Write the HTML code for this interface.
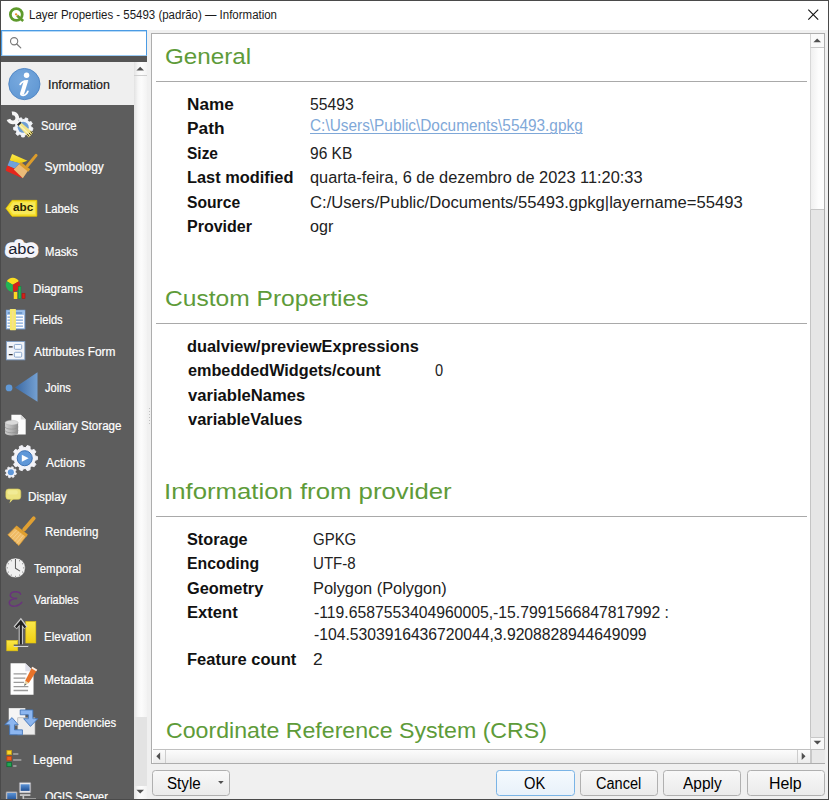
<!DOCTYPE html>
<html>
<head>
<meta charset="utf-8">
<title>Layer Properties</title>
<style>
html,body{margin:0;padding:0;}
body{width:829px;height:800px;overflow:hidden;background:#f0f0f0;font-family:"Liberation Sans",sans-serif;position:relative;}
.a{position:absolute;}
.t{position:absolute;white-space:pre;line-height:30px;transform-origin:0 0;}
svg{position:absolute;overflow:visible;}
.b{position:absolute;top:770.2px;height:23.8px;border:1px solid #b0b0b0;border-radius:3.5px;background:linear-gradient(#f8f8f8,#ebebeb);}
</style>
</head>
<body>
<!-- window chrome -->
<div class="a" style="left:0;top:0;width:829px;height:800px;background:#f0f0f0"></div>
<div class="a" style="left:0;top:0;width:829px;height:30px;background:#fff"></div>
<!-- search box -->
<div class="a" style="left:1px;top:30px;width:144px;height:24px;border:1px solid #4a9be4;border-bottom-color:#9ccbf3;background:#fff;box-shadow:inset 0 1px 0 0 #b9daf6, inset 1px 0 0 0 #d4e8f9"></div>
<!-- sidebar -->
<div class="a" style="left:1px;top:56px;width:146px;height:6px;background:#555555"></div>
<div class="a" style="left:1px;top:62px;width:132.6px;height:738px;background:#5d5d5d"></div>
<div class="a" style="left:1px;top:62.3px;width:132.6px;height:42.5px;background:#efefef"></div>
<!-- sidebar scrollbar -->
<div class="a" style="left:133.6px;top:62px;width:13.4px;height:738px;background:linear-gradient(90deg,#e2e2e2,#f6f6f6 30%,#fcfcfc 55%,#f3f3f3)"></div>
<div class="a" style="left:133.6px;top:75px;width:13.4px;height:1px;background:#cfcfcf"></div>
<div class="a" style="left:133.6px;top:717px;width:13.4px;height:69px;background:#e3e3e3"></div>
<!-- splitter dots -->
<div class="a" style="left:148.9px;top:408.1px;width:1.1px;height:1.1px;background:#c2c2c2"></div><div class="a" style="left:148.9px;top:411.1px;width:1.1px;height:1.1px;background:#c2c2c2"></div><div class="a" style="left:148.9px;top:414.0px;width:1.1px;height:1.1px;background:#c2c2c2"></div><div class="a" style="left:148.9px;top:417.0px;width:1.1px;height:1.1px;background:#c2c2c2"></div><div class="a" style="left:148.9px;top:420.0px;width:1.1px;height:1.1px;background:#c2c2c2"></div><div class="a" style="left:148.9px;top:423.0px;width:1.1px;height:1.1px;background:#c2c2c2"></div>
<!-- content frame -->
<div class="a" style="left:151.2px;top:32.8px;width:672.3px;height:729.7px;border:1px solid #adadad;background:#fff"></div>
<div class="a" style="left:156px;top:81px;width:651px;height:1px;background:#a9a9a9"></div>
<div class="a" style="left:156px;top:323px;width:651px;height:1px;background:#a9a9a9"></div>
<div class="a" style="left:156px;top:516px;width:651px;height:1px;background:#a9a9a9"></div>
<!-- vertical scrollbar -->
<div class="a" style="left:810.3px;top:34px;width:14px;height:715px;background:#e6e6e6;border-left:1.3px solid #c4c4c4;box-sizing:border-box"></div>
<div class="a" style="left:810.3px;top:34px;width:14px;height:14px;background:#f9f9f9;border-left:1.3px solid #d4d4d4;border-bottom:1px solid #c8c8c8;box-sizing:border-box"></div>
<div class="a" style="left:810.3px;top:48px;width:14px;height:162px;background:linear-gradient(90deg,#f0f0f0,#fdfdfd 60%);border-left:1.3px solid #d8d8d8;border-bottom:1.5px solid #c6c6c6;box-sizing:border-box"></div>
<div class="a" style="left:810.3px;top:736.5px;width:14px;height:13px;background:#f9f9f9;border-left:1.3px solid #d4d4d4;border-top:1px solid #c8c8c8;box-sizing:border-box"></div>
<!-- horizontal scrollbar -->
<div class="a" style="left:152.5px;top:749.3px;width:672px;height:14px;background:#e8e8e8;border-top:1px solid #c0c0c0;box-sizing:border-box"></div>
<div class="a" style="left:152.5px;top:750.3px;width:658px;height:13px;background:linear-gradient(#fcfcfc,#ececec)"></div>
<div class="a" style="left:164.5px;top:750.3px;width:1px;height:13px;background:#cdcdcd"></div>
<div class="a" style="left:797px;top:750.3px;width:1px;height:13px;background:#cdcdcd"></div>
<div class="a" style="left:810.3px;top:750.3px;width:1.3px;height:13px;background:#c8c8c8"></div>
<!-- buttons -->
<div class="b" style="left:151.5px;width:76px"></div>
<div class="b" style="left:496px;width:76.5px;border-color:#7ab4e6;background:linear-gradient(#f5fafe,#e8f1fa)"></div>
<div class="b" style="left:579.8px;width:76px"></div>
<div class="b" style="left:663.2px;width:76px"></div>
<div class="b" style="left:747.2px;width:75.5px"></div>
<svg width="829" height="800" viewBox="0 0 829 800" style="left:0;top:0">
<defs>
<linearGradient id="gj" x1="0" x2="1"><stop offset="0" stop-color="#3a68a2"/><stop offset="1" stop-color="#74a0d2"/></linearGradient>
<linearGradient id="gy" x1="0" x2="0" y1="0" y2="1"><stop offset="0" stop-color="#fbe84a"/><stop offset="1" stop-color="#efcf12"/></linearGradient>
<linearGradient id="gcyl" x1="0" x2="1"><stop offset="0" stop-color="#d0d0d0"/><stop offset="0.5" stop-color="#b4b4b4"/><stop offset="1" stop-color="#8c8c8c"/></linearGradient>
<linearGradient id="gscr" x1="0" x2="0" y1="0" y2="1"><stop offset="0" stop-color="#5b93d6"/><stop offset="1" stop-color="#1f4f94"/></linearGradient>
<radialGradient id="ginfo" cx="0.4" cy="0.35" r="0.75"><stop offset="0" stop-color="#78a9de"/><stop offset="1" stop-color="#5f97d3"/></radialGradient>
</defs>
<g transform="translate(0,0) scale(0.07246)"><circle cx="225" cy="200" r="82" fill="none" stroke="#5e9a2c" stroke-width="38"/>
<path d="M235,215 L320,290" stroke="#5e9a2c" stroke-width="36" stroke-linecap="butt"/>
<path d="M225,200 L250,224" stroke="#e8a040" stroke-width="14" opacity="0.7"/>
<circle cx="222" cy="198" r="16" fill="#f08c28"/></g>
<g transform="translate(0,0) scale(0.12500)"><circle cx="113" cy="330" r="29" fill="none" stroke="#7a7a7a" stroke-width="9"/><path d="M134,352 L166,383" stroke="#7a7a7a" stroke-width="10" stroke-linecap="round"/></g>
<path d="M808.3,9.7 L818.2,19.6 M818.2,9.7 L808.3,19.6" stroke="#111" stroke-width="1.1" fill="none"/>
<g transform="translate(0,60) scale(0.06250)"><circle cx="390" cy="385" r="250" fill="url(#ginfo)" stroke="#4c82c2" stroke-width="14"/>
<circle cx="425" cy="243" r="44" fill="#fff"/>
<path d="M415,338 L350,548" stroke="#fff" stroke-width="66" stroke-linecap="butt" fill="none"/>
<path d="M322,392 C345,352 385,334 440,334" stroke="#fff" stroke-width="26" fill="none" stroke-linecap="round"/>
<path d="M335,552 C375,580 425,560 446,502" stroke="#fff" stroke-width="28" fill="none" stroke-linecap="round"/></g>
<g transform="translate(0,105) scale(0.06031)"><path d="M514.9,366.1 L546.6,380.9 L538.1,422.9 L503.1,424.2 L487.1,450.5 L501.8,482.2 L468.3,508.9 L440.6,487.5 L411.5,497.3 L402.3,531.1 L359.5,530.0 L352.1,495.8 L323.5,484.5 L294.7,504.5 L262.6,476.2 L279.0,445.2 L264.2,418.2 L229.4,415.0 L223.0,372.7 L255.4,359.4 L261.5,329.3 L236.8,304.5 L259.2,267.9 L292.5,278.6 L316.6,259.4 L313.6,224.6 L354.3,210.9 L372.9,240.6 L403.7,241.3 L423.8,212.7 L463.7,228.4 L458.9,263.1 L482.0,283.5 L515.8,274.5 L536.3,312.1 L510.4,335.6Z" fill="#f2f4f8" stroke="#f2f4f8" stroke-width="14" stroke-linejoin="round"/>
<circle cx="385" cy="370" r="92" fill="#6f9fd4"/>
<path d="M198.9,139 A75,75 0 1 1 140.2,237.8" fill="none" stroke="#f6f6f6" stroke-width="62" stroke-linecap="butt"/>
<path d="M250,258 L305,318" stroke="#f6f6f6" stroke-width="62"/>
<path d="M282,322 L335,272 L358,298 L306,348Z" fill="#2a2a2a"/>
<path d="M306,348 L358,298 L548,462 L478,540Z" fill="#f3e486"/><path d="M330,340 L505,505" stroke="#f9f3c0" stroke-width="18"/>
<path d="M452,478 L482,522 M482,462 L512,502 M508,440 L538,478" stroke="#3a3210" stroke-width="16" fill="none"/>
</g>
<g transform="translate(0,145) scale(0.06031)"><path d="M200,150 L455,262 L330,305 L160,255Z" fill="url(#gy)"/>
<path d="M160,255 L330,303 L240,392 L125,338Z" fill="#6fa2da"/>
<path d="M118,338 L240,390 L372,550 L95,428Z" fill="#e5261c"/>
<path d="M335,300 L470,420 L378,550 L228,405Z" fill="#ebbb78"/>
<path d="M345,283 L502,402 L468,445 L318,322Z" fill="#dc9d2c"/>
<path d="M455,345 L598,172" stroke="#dc9c2c" stroke-width="50" stroke-linecap="round"/></g>
<g transform="translate(0,190) scale(0.06031)"><path d="M100,305 L200,172 L610,172 L610,435 L200,435Z" fill="#f5df2a" stroke="#e6c400" stroke-width="14" stroke-linejoin="round"/>
<path d="M150,305 L215,205 L580,205 L580,402 L215,402Z" fill="#f9ec6e" opacity="0.7"/>
<text x="216" y="356" font-family="Liberation Sans, sans-serif" font-weight="bold" font-size="190" fill="#2a2600" textLength="335" lengthAdjust="spacingAndGlyphs">abc</text></g>
<g transform="translate(0,230) scale(0.06031)"><text x="135" y="405" font-family="Liberation Sans, sans-serif" font-size="255" fill="#1c2230" stroke="#f4f4fa" stroke-width="125" stroke-linejoin="round" paint-order="stroke" textLength="440" lengthAdjust="spacingAndGlyphs">abc</text></g>
<g transform="translate(0,270) scale(0.04831)"><path d="M265,305 L139.4,232.5 A145,145 0 0 1 390.6,232.5Z" fill="#fbdd20"/>
<path d="M265,305 L390.6,232.5 A145,145 0 0 1 265.0,450.0Z" fill="#d2221a"/>
<path d="M265,305 L265.0,450.0 A145,145 0 0 1 139.4,232.5Z" fill="#22b356"/>
<rect x="285" y="455" width="72" height="145" fill="#fcd822"/>
<rect x="378" y="340" width="56" height="255" fill="#22b356" stroke="#14843a" stroke-width="10"/>
<rect x="456" y="482" width="62" height="108" fill="#d2221a" stroke="#a01410" stroke-width="10"/></g>
<g transform="translate(0,300) scale(0.04831)"><rect x="132" y="212" width="382" height="386" fill="#fdfdff" stroke="#78a4dc" stroke-width="20"/>
<rect x="140" y="218" width="366" height="90" fill="#9cc0ec"/>
<rect x="160" y="255" width="300" height="28" fill="#5a86c0"/>
<path d="M155,355 H475 M155,418 H475 M155,480 H475 M155,542 H475" stroke="#7ea6dc" stroke-width="24"/>
<rect x="205" y="185" width="125" height="440" rx="12" fill="#f6e86c"/>
<rect x="250" y="230" width="30" height="340" fill="#f3df9a" opacity="0.8"/></g>
<g transform="translate(0,332) scale(0.04831)"><rect x="132" y="198" width="382" height="378" fill="#f0f3f8" stroke="#7c9cc4" stroke-width="18"/>
<rect x="297" y="258" width="152" height="100" rx="22" fill="#f4faff" stroke="#7b9cc6" stroke-width="18"/>
<rect x="297" y="420" width="152" height="100" rx="22" fill="#f4faff" stroke="#7b9cc6" stroke-width="18"/>
<path d="M182,308 H262 M182,468 H262" stroke="#2c2c30" stroke-width="30"/></g>
<g transform="translate(0,365) scale(0.06031)"><circle cx="150" cy="380" r="56" fill="#6199d6"/>
<path d="M248,375 L622,122 L622,608Z" fill="url(#gj)"/></g>
<g transform="translate(0,405) scale(0.04831)"><path d="M235,200 L430,200 L532,300 L532,612 L235,612Z" fill="#fdfdfd"/>
<path d="M430,200 L532,300 L430,300Z" fill="#d6d6d6"/>
<path d="M105,365 V580 A135,50 0 0 0 375,580 V365Z" fill="url(#gcyl)"/>
<path d="M105,450 A135,50 0 0 0 375,450 M105,525 A135,50 0 0 0 375,525" fill="none" stroke="#909090" stroke-width="14"/>
<ellipse cx="240" cy="365" rx="135" ry="50" fill="#dadada" stroke="#a8a8a8" stroke-width="8"/></g>
<g transform="translate(0,440) scale(0.06031)"><path d="M582.2,263.8 L620.5,274.8 L620.5,325.2 L582.2,336.2 L570.6,371.9 L595.1,403.3 L565.5,444.2 L528.0,430.5 L497.7,452.6 L499.1,492.4 L451.0,508.0 L428.8,475.0 L391.2,475.0 L369.0,508.0 L320.9,492.4 L322.3,452.6 L292.0,430.5 L254.5,444.2 L224.9,403.3 L249.4,371.9 L237.8,336.2 L199.5,325.2 L199.5,274.8 L237.8,263.8 L249.4,228.1 L224.9,196.7 L254.5,155.8 L292.0,169.5 L322.3,147.4 L320.9,107.6 L369.0,92.0 L391.2,125.0 L428.8,125.0 L451.0,92.0 L499.1,107.6 L497.7,147.4 L528.0,169.5 L565.5,155.8 L595.1,196.7 L570.6,228.1Z" fill="#f3f3f8" stroke="#f3f3f8" stroke-width="16" stroke-linejoin="round"/>
<circle cx="410" cy="302" r="125" fill="#5f97d8" stroke="#3b6fb2" stroke-width="16"/>
<path d="M362,243 L362,362 L475,302Z" fill="#fdfdff"/>
<path d="M253.9,538.0 L272.9,549.1 L264.7,575.8 L242.7,574.3 L230.1,589.4 L235.7,610.7 L211.0,623.7 L196.6,607.1 L177.0,608.9 L165.9,627.9 L139.2,619.7 L140.7,597.7 L125.6,585.1 L104.3,590.7 L91.3,566.0 L107.9,551.6 L106.1,532.0 L87.1,520.9 L95.3,494.2 L117.3,495.7 L129.9,480.6 L124.3,459.3 L149.0,446.3 L163.4,462.9 L183.0,461.1 L194.1,442.1 L220.8,450.3 L219.3,472.3 L234.4,484.9 L255.7,479.3 L268.7,504.0 L252.1,518.4Z" fill="#f3f3f8" stroke="#f3f3f8" stroke-width="12" stroke-linejoin="round"/>
<circle cx="180" cy="535" r="50" fill="#5f97d8"/></g>
<g transform="translate(0,478) scale(0.06031)"><path d="M180,340 L232,340 L155,418Z" fill="#e9df78"/>
<rect x="97" y="182" width="248" height="172" rx="48" fill="#ece380" stroke="#d8cb58" stroke-width="10"/>
<rect x="125" y="205" width="170" height="70" rx="30" fill="#f5f0a4" opacity="0.6"/></g>
<g transform="translate(0,510) scale(0.06031)"><path d="M262,278 L445,422 L312,590 L130,412Z" fill="#efbb66" stroke="#d8982e" stroke-width="12" stroke-linejoin="round"/>
<path d="M299,307 L166,448 M335,336 L203,483 M372,364 L239,519 M408,393 L276,554" stroke="#f7d596" stroke-width="12"/>
<path d="M275,258 L462,405 L430,448 L243,302Z" fill="#df9f30"/>
<path d="M400,322 L560,138" stroke="#e0a032" stroke-width="62" stroke-linecap="round"/></g>
<g transform="translate(0,550) scale(0.04831)"><circle cx="320" cy="370" r="205" fill="#f0f0f0" stroke="#484848" stroke-width="10"/><circle cx="492" cy="370" r="11" fill="#666"/><circle cx="469" cy="456" r="11" fill="#666"/><circle cx="406" cy="519" r="11" fill="#666"/><circle cx="320" cy="542" r="11" fill="#666"/><circle cx="234" cy="519" r="11" fill="#666"/><circle cx="171" cy="456" r="11" fill="#666"/><circle cx="148" cy="370" r="11" fill="#666"/><circle cx="171" cy="284" r="11" fill="#666"/><circle cx="234" cy="221" r="11" fill="#666"/><circle cx="320" cy="198" r="11" fill="#666"/><circle cx="406" cy="221" r="11" fill="#666"/><circle cx="469" cy="284" r="11" fill="#666"/>
<path d="M320,185 V378 L415,437" fill="none" stroke="#5c5c5c" stroke-width="21" stroke-linejoin="round"/></g>
<g transform="translate(0,582) scale(0.04831)"><path d="M425,250 C410,195 250,175 215,255 C195,320 280,345 355,340 C260,340 175,385 195,450 C225,530 390,510 450,420" fill="none" stroke="#6a2f80" stroke-width="30" stroke-linecap="round" opacity="0.9"/></g>
<g transform="translate(0,612) scale(0.06031)"><rect x="428" y="158" width="166" height="356" fill="url(#gy)" stroke="#e2c212" stroke-width="10"/>
<rect x="112" y="472" width="182" height="172" fill="url(#gy)" stroke="#e2c212" stroke-width="10"/>
<path d="M345,165 V540 M252,262 L345,150 L428,262" fill="none" stroke="#cfcfcf" stroke-width="70" stroke-linejoin="miter"/>
<path d="M228,562 H468" stroke="#d4d4d4" stroke-width="36"/>
<path d="M345,170 V540 M262,258 L345,158 L420,258" fill="none" stroke="#222" stroke-width="36"/>
<path d="M228,550 H468" stroke="#222" stroke-width="16"/></g>
<g transform="translate(0,657) scale(0.06031)"><path d="M175,105 L420,105 L556,238 L556,626 L175,626Z" fill="#fefefe"/>
<path d="M420,105 L556,238 L420,238Z" fill="#dfe0ea"/>
<path d="M225,280 H440 M225,350 H420 M225,420 H400 M225,490 H470 M225,556 H465" stroke="#9a9a9a" stroke-width="22"/>
<path d="M400,482 L418,395 L478,432Z" fill="#e8d6a8"/>
<path d="M400,482 L410,440 L438,458Z" fill="#596a78"/>
<path d="M535,160 L618,212 L478,432 L418,395Z" fill="#e8732a"/>
<path d="M535,160 L618,212 L600,238 L520,186Z" fill="#f6f0ea"/></g>
<g transform="translate(0,700) scale(0.06031)"><rect x="145" y="135" width="275" height="285" fill="#f5f5f5"/>
<rect x="295" y="295" width="285" height="282" fill="#ececec" stroke="#a8a8a8" stroke-width="10"/>
<path d="M335,165 L545,165 L545,310 L628,310 L505,438 L392,310 L470,310 L470,245 L335,245Z" fill="#8cb6f0" stroke="#3f72b6" stroke-width="14" stroke-linejoin="round"/>
<path d="M78,410 L200,292 L302,410 L240,410 L240,495 L372,495 L372,577 L160,577 L160,410Z" fill="#8cb6f0" stroke="#3f72b6" stroke-width="14" stroke-linejoin="round"/></g>
<g transform="translate(0,740) scale(0.07502)"><rect x="92" y="138" width="62" height="58" fill="#f9d62a" stroke="#c49a10" stroke-width="10"/>
<rect x="92" y="218" width="62" height="55" fill="#f0601c" stroke="#c04410" stroke-width="10"/>
<rect x="92" y="298" width="62" height="58" fill="#22a654" stroke="#0c6a30" stroke-width="10"/>
<path d="M175,186 H245 M175,266 H285 M175,346 H220" stroke="#a8a8a8" stroke-width="22"/>
<rect x="258" y="565" width="152" height="140" rx="10" fill="#e6e6ea" stroke="#8a8a90" stroke-width="8"/>
<rect x="275" y="590" width="120" height="88" fill="url(#gscr)"/>
<rect x="265" y="722" width="140" height="24" fill="#c8c8c8"/>
<rect x="300" y="746" width="22" height="45" fill="#c8c8c8"/>
<path d="M322,780 H480" stroke="#a0a0a0" stroke-width="12"/>
<rect x="80" y="690" width="148" height="120" rx="10" fill="#c8c8cc" stroke="#8a8a90" stroke-width="8"/>
<rect x="96" y="706" width="118" height="100" fill="url(#gscr)"/></g>
<path d="M813.4000000000001,42.199999999999996 L817.2,38.4 L821.0,42.199999999999996Z" fill="#505050"/>
<path d="M813.6,740.7 L817.4,744.5 L821.1999999999999,740.7Z" fill="#505050"/>
<path d="M136.39999999999998,70.60000000000001 L140.2,66.8 L144.0,70.60000000000001Z" fill="#505050"/>
<path d="M136.39999999999998,789.7 L140.2,793.5 L144.0,789.7Z" fill="#505050"/>
<path d="M160.1,752.4000000000001 L156.29999999999998,756.2 L160.1,760.0Z" fill="#505050"/>
<path d="M801.7,752.4000000000001 L805.5,756.2 L801.7,760.0Z" fill="#505050"/>
<path d="M218.1,781.1 L220.9,784.1 L223.70000000000002,781.1Z" fill="#505050"/>
</svg>

<div class="t" style="left:165.31px;top:41.67px;font-size:22.3px;font-weight:normal;color:#5e9b39;transform:scaleX(1.0857);">General</div>
<div class="t" style="left:165.20px;top:283.87px;font-size:22.3px;font-weight:normal;color:#5e9b39;transform:scaleX(1.1022);">Custom Properties</div>
<div class="t" style="left:163.99px;top:476.77px;font-size:22.3px;font-weight:normal;color:#5e9b39;transform:scaleX(1.1547);">Information from provider</div>
<div class="t" style="left:166.26px;top:716.27px;font-size:22.3px;font-weight:normal;color:#5e9b39;transform:scaleX(1.0386);">Coordinate Reference System (CRS)</div>
<div class="t" style="left:186.91px;top:89.83px;font-size:15.8px;font-weight:bold;color:#111;transform:scaleX(1.0857);">Name</div>
<div class="t" style="left:186.91px;top:114.33px;font-size:15.8px;font-weight:bold;color:#111;transform:scaleX(1.0938);">Path</div>
<div class="t" style="left:187.02px;top:138.83px;font-size:15.8px;font-weight:bold;color:#111;transform:scaleX(0.9800);">Size</div>
<div class="t" style="left:186.96px;top:163.43px;font-size:15.8px;font-weight:bold;color:#111;transform:scaleX(1.0366);">Last modified</div>
<div class="t" style="left:187.01px;top:187.93px;font-size:15.8px;font-weight:bold;color:#111;transform:scaleX(0.9923);">Source</div>
<div class="t" style="left:186.99px;top:212.43px;font-size:15.8px;font-weight:bold;color:#111;transform:scaleX(1.0143);">Provider</div>
<div class="t" style="left:309.51px;top:89.83px;font-size:15.8px;font-weight:normal;color:#222;transform:scaleX(0.9930);">55493</div>
<div class="t" style="left:309.53px;top:111.32px;font-size:15.81px;font-weight:normal;color:#7fa8d8;transform:scaleX(0.9737);text-decoration:underline;text-decoration-thickness:1px;text-underline-offset:2px;">C:\Users\Public\Documents\55493.gpkg</div>
<div class="t" style="left:309.52px;top:138.83px;font-size:15.8px;font-weight:normal;color:#222;transform:scaleX(0.9829);">96 KB</div>
<div class="t" style="left:310.26px;top:163.43px;font-size:15.8px;font-weight:normal;color:#222;transform:scaleX(1.0353);">quarta-feira, 6 de dezembro de 2023 11:20:33</div>
<div class="t" style="left:310.25px;top:187.93px;font-size:15.8px;font-weight:normal;color:#222;transform:scaleX(1.0527);">C:/Users/Public/Documents/55493.gpkg|layername=55493</div>
<div class="t" style="left:310.18px;top:212.43px;font-size:15.8px;font-weight:normal;color:#222;transform:scaleX(1.0182);">ogr</div>
<div class="t" style="left:186.76px;top:331.93px;font-size:15.8px;font-weight:bold;color:#111;transform:scaleX(1.0360);">dualview/previewExpressions</div>
<div class="t" style="left:187.80px;top:356.33px;font-size:15.8px;font-weight:bold;color:#111;transform:scaleX(1.0271);">embeddedWidgets/count</div>
<div class="t" style="left:187.80px;top:380.73px;font-size:15.8px;font-weight:bold;color:#111;transform:scaleX(1.0514);">variableNames</div>
<div class="t" style="left:187.80px;top:405.13px;font-size:15.8px;font-weight:bold;color:#111;transform:scaleX(1.0413);">variableValues</div>
<div class="t" style="left:435.20px;top:356.33px;font-size:15.8px;font-weight:normal;color:#222;transform:scaleX(0.9250);">0</div>
<div class="t" style="left:186.77px;top:525.13px;font-size:15.8px;font-weight:bold;color:#111;transform:scaleX(1.0316);">Storage</div>
<div class="t" style="left:186.80px;top:549.43px;font-size:15.8px;font-weight:bold;color:#111;transform:scaleX(1.0014);">Encoding</div>
<div class="t" style="left:186.77px;top:573.73px;font-size:15.8px;font-weight:bold;color:#111;transform:scaleX(1.0342);">Geometry</div>
<div class="t" style="left:186.75px;top:598.03px;font-size:15.8px;font-weight:bold;color:#111;transform:scaleX(1.0511);">Extent</div>
<div class="t" style="left:186.75px;top:644.63px;font-size:15.8px;font-weight:bold;color:#111;transform:scaleX(1.0462);">Feature count</div>
<div class="t" style="left:313.25px;top:525.13px;font-size:15.8px;font-weight:normal;color:#222;transform:scaleX(0.9477);">GPKG</div>
<div class="t" style="left:313.25px;top:549.43px;font-size:15.8px;font-weight:normal;color:#222;transform:scaleX(0.9535);">UTF-8</div>
<div class="t" style="left:313.16px;top:573.73px;font-size:15.8px;font-weight:normal;color:#222;transform:scaleX(1.0362);">Polygon (Polygon)</div>
<div class="t" style="left:313.50px;top:598.03px;font-size:15.8px;font-weight:normal;color:#222;transform:scaleX(0.9960);">-119.6587553404960005,-15.7991566847817992 :</div>
<div class="t" style="left:313.51px;top:620.33px;font-size:15.8px;font-weight:normal;color:#222;transform:scaleX(0.9937);">-104.5303916436720044,3.9208828944649099</div>
<div class="t" style="left:313.10px;top:644.63px;font-size:15.8px;font-weight:normal;color:#222;transform:scaleX(1.1000);">2</div>
<div class="t" style="left:48.07px;top:69.69px;font-size:12px;font-weight:normal;color:#1a1a1a;transform:scaleX(1.0293);-webkit-text-stroke:0.2px #1a1a1a;">Information</div>
<div class="t" style="left:40.82px;top:110.94px;font-size:12px;font-weight:normal;color:#ffffff;transform:scaleX(0.9324);-webkit-text-stroke:0.2px #ffffff;">Source</div>
<div class="t" style="left:44.50px;top:151.69px;font-size:12px;font-weight:normal;color:#ffffff;transform:scaleX(1.0000);-webkit-text-stroke:0.2px #ffffff;">Symbology</div>
<div class="t" style="left:44.56px;top:194.19px;font-size:12px;font-weight:normal;color:#ffffff;transform:scaleX(0.9412);-webkit-text-stroke:0.2px #ffffff;">Labels</div>
<div class="t" style="left:44.56px;top:236.69px;font-size:12px;font-weight:normal;color:#ffffff;transform:scaleX(0.9412);-webkit-text-stroke:0.2px #ffffff;">Masks</div>
<div class="t" style="left:32.78px;top:273.94px;font-size:12px;font-weight:normal;color:#ffffff;transform:scaleX(0.9700);-webkit-text-stroke:0.2px #ffffff;">Diagrams</div>
<div class="t" style="left:32.82px;top:305.44px;font-size:12px;font-weight:normal;color:#ffffff;transform:scaleX(0.9274);-webkit-text-stroke:0.2px #ffffff;">Fields</div>
<div class="t" style="left:33.75px;top:336.69px;font-size:12px;font-weight:normal;color:#ffffff;transform:scaleX(0.9938);-webkit-text-stroke:0.2px #ffffff;">Attributes Form</div>
<div class="t" style="left:44.70px;top:373.44px;font-size:12px;font-weight:normal;color:#ffffff;transform:scaleX(0.9214);-webkit-text-stroke:0.2px #ffffff;">Joins</div>
<div class="t" style="left:33.75px;top:410.94px;font-size:12px;font-weight:normal;color:#ffffff;transform:scaleX(0.9639);-webkit-text-stroke:0.2px #ffffff;">Auxiliary Storage</div>
<div class="t" style="left:45.50px;top:447.69px;font-size:12px;font-weight:normal;color:#ffffff;transform:scaleX(0.9936);-webkit-text-stroke:0.2px #ffffff;">Actions</div>
<div class="t" style="left:27.77px;top:482.19px;font-size:12px;font-weight:normal;color:#ffffff;transform:scaleX(0.9803);-webkit-text-stroke:0.2px #ffffff;">Display</div>
<div class="t" style="left:44.54px;top:517.19px;font-size:12px;font-weight:normal;color:#ffffff;transform:scaleX(0.9630);-webkit-text-stroke:0.2px #ffffff;">Rendering</div>
<div class="t" style="left:34.00px;top:554.14px;font-size:12px;font-weight:normal;color:#ffffff;transform:scaleX(0.9551);-webkit-text-stroke:0.2px #ffffff;">Temporal</div>
<div class="t" style="left:34.00px;top:584.94px;font-size:12px;font-weight:normal;color:#ffffff;transform:scaleX(0.9082);-webkit-text-stroke:0.2px #ffffff;">Variables</div>
<div class="t" style="left:44.44px;top:622.04px;font-size:12px;font-weight:normal;color:#ffffff;transform:scaleX(0.9604);-webkit-text-stroke:0.2px #ffffff;">Elevation</div>
<div class="t" style="left:44.41px;top:664.94px;font-size:12px;font-weight:normal;color:#ffffff;transform:scaleX(0.9878);-webkit-text-stroke:0.2px #ffffff;">Metadata</div>
<div class="t" style="left:44.46px;top:707.94px;font-size:12px;font-weight:normal;color:#ffffff;transform:scaleX(0.9408);-webkit-text-stroke:0.2px #ffffff;">Dependencies</div>
<div class="t" style="left:33.02px;top:745.34px;font-size:12px;font-weight:normal;color:#ffffff;transform:scaleX(0.9842);-webkit-text-stroke:0.2px #ffffff;">Legend</div>
<div class="t" style="left:45.40px;top:782.44px;font-size:12px;font-weight:normal;color:#ffffff;transform:scaleX(0.9145);-webkit-text-stroke:0.2px #ffffff;">QGIS Server</div>
<div class="t" style="left:28.94px;top:0.24px;font-size:12px;font-weight:normal;color:#1a1a1a;transform:scaleX(0.9558);">Layer Properties - 55493 (padrão) — Information</div>
<div class="t" style="left:167.33px;top:769.29px;font-size:15.6px;font-weight:normal;color:#000;transform:scaleX(0.9727);">Style</div>
<div class="t" style="left:523.66px;top:768.89px;font-size:15.6px;font-weight:normal;color:#000;transform:scaleX(0.9429);">OK</div>
<div class="t" style="left:595.67px;top:768.89px;font-size:15.6px;font-weight:normal;color:#000;transform:scaleX(0.9319);">Cancel</div>
<div class="t" style="left:683.00px;top:768.89px;font-size:15.6px;font-weight:normal;color:#000;transform:scaleX(0.9923);">Apply</div>
<div class="t" style="left:769.48px;top:768.89px;font-size:15.6px;font-weight:normal;color:#000;transform:scaleX(1.0194);">Help</div>
<!-- window border -->
<div class="a" style="left:0;top:0;width:829px;height:1px;background:#4a4a4a"></div>
<div class="a" style="left:0;top:0;width:1px;height:800px;background:#4a4a4a"></div>
<div class="a" style="left:828px;top:0;width:1px;height:800px;background:#4a4a4a"></div>
<div class="a" style="left:0;top:798.6px;width:829px;height:1.4px;background:#4a4a4a"></div>
</body>
</html>
